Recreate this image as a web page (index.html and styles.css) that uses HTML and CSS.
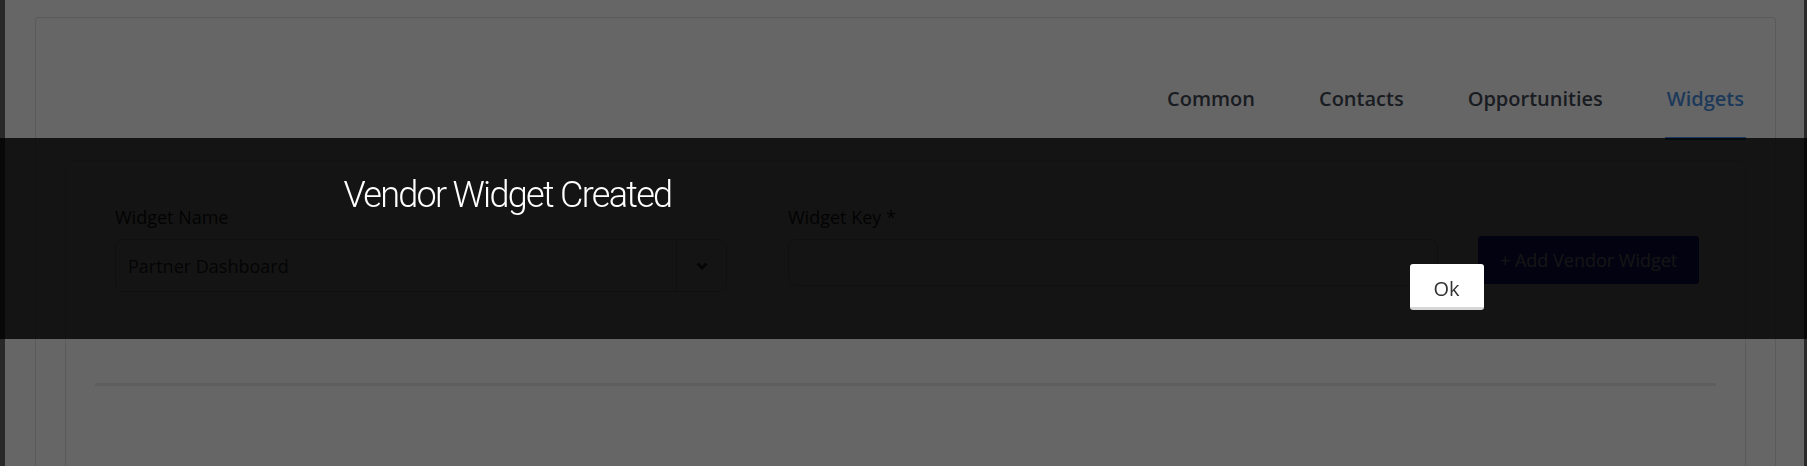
FILE: index.html
```html
<!DOCTYPE html>
<html lang="en">
<head>
    <meta charset="UTF-8">
    <meta name="viewport" content="width=device-width, initial-scale=1.0">
    <title>Vendor Widgets</title>
    <link rel="stylesheet" href="styles.css">
</head>
<body>
    <div class="frame">
        <div class="card">
            <nav class="tabs">
                <a class="tab">Common</a>
                <a class="tab">Contacts</a>
                <a class="tab">Opportunities</a>
                <a class="tab active">Widgets</a>
            </nav>

            <section class="panel">
                <form class="widget-form">
                    <div class="field field-name">
                        <label>Widget Name</label>
                        <div class="select">
                            <span class="select-value">Partner Dashboard</span>
                            <span class="select-arrow">
                                <svg width="12" height="8" viewBox="0 0 12 8"><polyline points="1.5,1.5 6,6 10.5,1.5" fill="none" stroke="#444" stroke-width="3"/></svg>
                            </span>
                        </div>
                    </div>
                    <div class="field field-key">
                        <label>Widget Key *</label>
                        <input type="text" class="input">
                    </div>
                    <button type="button" class="btn-add">+ Add Vendor Widget</button>
                </form>
                <hr class="divider">
            </section>
        </div>
    </div>

    <div class="backdrop">
        <div class="alert">
            <div class="alert-inner">
                <h2 class="alert-title">Vendor Widget Created</h2>
                <div class="alert-actions">
                    <button type="button" class="btn-ok">Ok</button>
                </div>
            </div>
        </div>
    </div>
</body>
</html>
```

FILE: styles.css
```css
html, body {
    margin: 0;
    height: 100%;
    overflow: hidden;
}
body {
    font-family: "Open Sans", Arial, sans-serif;
    background: #fff;
    color: #222;
}
.frame {
    height: 100%;
    box-sizing: border-box;
    display: flex;
    flex-direction: column;
    border-left: 5px solid #676767;
    border-right: 3px solid #676767;
    padding: 17px 28px 0 30px;
}
.card {
    flex: 1;
    display: flex;
    flex-direction: column;
    border: 1px solid #e2e2e2;
    border-bottom: none;
    border-radius: 4px 4px 0 0;
    padding: 0 29px;
}
.tabs {
    display: flex;
    justify-content: flex-end;
    gap: 60px;
    padding-top: 67px;
}
.tab {
    font-size: 20px;
    font-weight: 600;
    line-height: 28px;
    padding: 0 2px 24px;
    border-bottom: 3px solid transparent;
    color: #3f4654;
    cursor: pointer;
}
.tab.active {
    color: #4a90e2;
    border-bottom-color: #4a90e2;
}
.panel {
    flex: 1;
    margin-top: 20px;
    border: 1px solid #e2e2e2;
    border-bottom: none;
    border-radius: 6px 6px 0 0;
    padding: 44px 29px 0;
}
.widget-form {
    display: flex;
    align-items: flex-start;
    padding-left: 20px;
}
.field label {
    display: block;
    font-size: 18px;
    line-height: 24px;
    margin-bottom: 10px;
}
.field-name {
    width: 612px;
    margin-right: 61px;
}
.field-key {
    width: 650px;
    margin-right: 40px;
}
.select {
    display: flex;
    height: 53px;
    box-sizing: border-box;
    border: 1px solid #c8c8c8;
    border-radius: 8px;
}
.select-value {
    flex: 1;
    display: flex;
    align-items: center;
    padding-left: 12px;
    font-size: 18px;
    color: #333;
}
.select-arrow {
    width: 50px;
    box-sizing: border-box;
    border-left: 1px solid #c8c8c8;
    display: flex;
    align-items: center;
    justify-content: center;
}
.input {
    display: block;
    width: 100%;
    height: 47px;
    box-sizing: border-box;
    border: 1px solid #c8c8c8;
    border-radius: 8px;
}
.btn-add {
    margin-top: 31px;
    height: 48px;
    padding: 0 22px;
    background: #2323d8;
    color: #fff;
    border: none;
    border-radius: 3px;
    font-family: "Open Sans", Arial, sans-serif;
    font-size: 18px;
}
.divider {
    border: none;
    height: 3px;
    background: #ebebeb;
    margin: 91px 0 0;
}
.backdrop {
    position: fixed;
    inset: 0;
    background: rgba(0, 0, 0, 0.6);
    padding-top: 138px;
}
.alert {
    height: 201px;
    box-sizing: border-box;
    background: rgba(0, 0, 0, 0.8);
    padding: 35px 0 29px;
}
.alert-inner {
    width: 1160px;
    margin: 0 auto;
    display: flex;
    flex-direction: column;
}
.alert-title {
    margin: 0 0 0 20px;
    font-family: Roboto, "Open Sans", sans-serif;
    font-weight: 300;
    font-size: 36px;
    line-height: 44px;
    letter-spacing: -1.7px;
    color: #fff;
}
.alert-actions {
    display: flex;
    justify-content: flex-end;
    margin-top: 47px;
}
.btn-ok {
    width: 74px;
    height: 46px;
    box-sizing: border-box;
    padding: 5px 0 0;
    background: #fff;
    border: none;
    border-bottom: 3px solid #d6d6d6;
    border-radius: 3px;
    font-family: "Open Sans", Arial, sans-serif;
    font-size: 20px;
    color: #333;
}
```
